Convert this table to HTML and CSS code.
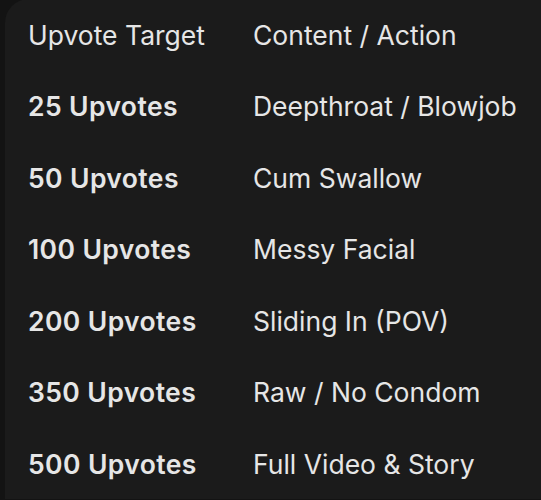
FILE: index.html
```html
<!DOCTYPE html>
<html>
<head>
<meta charset="utf-8">
<link rel="stylesheet" href="styles.css">
</head>
<body>
<div class="card">
  <div class="table">
    <div class="cell head">Upvote Target</div><div class="cell head">Content / Action</div>
    <div class="cell key">25 Upvotes</div><div class="cell">Deepthroat / Blowjob</div>
    <div class="cell key">50 Upvotes</div><div class="cell">Cum Swallow</div>
    <div class="cell key">100 Upvotes</div><div class="cell">Messy Facial</div>
    <div class="cell key">200 Upvotes</div><div class="cell">Sliding In (POV)</div>
    <div class="cell key">350 Upvotes</div><div class="cell">Raw / No Condom</div>
    <div class="cell key">500 Upvotes</div><div class="cell">Full Video &amp; Story</div>
  </div>
</div>
</body>
</html>
```
FILE: styles.css
```css
html, body { margin: 0; padding: 0; }
body {
  background: #131313;
  width: 541px;
  height: 500px;
  overflow: hidden;
  font-family: Inter, "Open Sans", sans-serif;
  color: #e6e6e6;
}
.card {
  margin-left: 5px;
  width: 560px;
  height: 500px;
  background: #1b1b1b;
  border-radius: 24px 24px 0 0;
  box-sizing: border-box;
  padding-left: 23px;
  padding-top: 0;
}
.table {
  display: grid;
  grid-template-columns: 225px auto;
  grid-auto-rows: 71.5px;
  align-items: center;
  margin-top: -1px;
}
.cell {
  font-size: 26.5px;
  line-height: 30px;
  white-space: nowrap;
}
.key { font-weight: 600; letter-spacing: 0.4px; }
```
